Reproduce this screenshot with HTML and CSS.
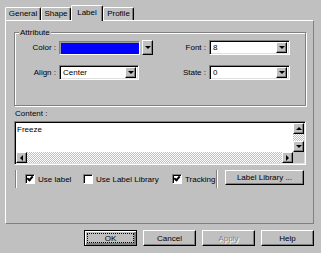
FILE: index.html
```html
<!DOCTYPE html>
<html lang="en">
<head>
  <meta charset="UTF-8" />
  <title>Label Properties</title>
  <link rel="stylesheet" href="styles.css">
</head>
<body>
  <div class="dialog">
    <div class="tabs">
      <div class="tab tab-general">General</div>
      <div class="tab tab-shape">Shape</div>
      <div class="tab tab-label active">Label</div>
      <div class="tab tab-profile">Profile</div>
    </div>

    <div class="panel">
      <div class="group">
        <span class="legend">Attribute</span>
        <div class="attr-row first">
          <span class="lbl lbl-left">Color :</span>
          <div class="ctl">
            <span class="color-field"></span>
            <span class="btn3d drop-big"><i class="tri-down"></i></span>
          </div>
          <span class="lbl lbl-right">Font :</span>
          <div class="select wide">
            <span class="val">8</span>
            <span class="btn3d drop"><i class="tri-down"></i></span>
          </div>
        </div>
        <div class="attr-row">
          <span class="lbl lbl-left">Align :</span>
          <div class="ctl">
            <div class="select">
              <span class="val">Center</span>
              <span class="btn3d drop"><i class="tri-down"></i></span>
            </div>
          </div>
          <span class="lbl lbl-right">State :</span>
          <div class="select wide">
            <span class="val">0</span>
            <span class="btn3d drop"><i class="tri-down"></i></span>
          </div>
        </div>
      </div>

      <div class="content-lbl">Content :</div>
      <div class="memo">
        <div class="memo-main">
          <div class="memo-text">Freeze</div>
          <div class="vscroll">
            <span class="btn3d sb-btn"><i class="tri-up"></i></span>
            <span class="sb-track"></span>
            <span class="btn3d sb-btn"><i class="tri-down"></i></span>
          </div>
        </div>
        <div class="hscroll">
          <span class="btn3d sb-btn"><i class="tri-left"></i></span>
          <span class="sb-track"></span>
          <span class="btn3d sb-btn"><i class="tri-right"></i></span>
          <span class="sb-corner"></span>
        </div>
      </div>

      <div class="opt-row">
        <span class="vsep"></span>
        <label class="opt opt-1"><span class="cbox checked"></span>Use label</label>
        <label class="opt opt-2"><span class="cbox"></span>Use Label Library</label>
        <label class="opt opt-3"><span class="cbox checked"></span>Tracking</label>
        <span class="vsep"></span>
        <span class="btn3d push lib-btn">Label Library ...</span>
      </div>
    </div>

    <div class="buttons">
      <span class="btn3d push default"><span class="focus">OK</span></span>
      <span class="btn3d push">Cancel</span>
      <span class="btn3d push disabled">Apply</span>
      <span class="btn3d push">Help</span>
    </div>
  </div>
</body>
</html>
```

FILE: styles.css
```css
body {
  margin: 0;
  background: #c0c0c0;
  font-family: "Liberation Sans", Arial, sans-serif;
  font-size: 8px;
  color: #000;
}
.dialog {
  width: 321px;
  height: 253px;
  overflow: hidden;
}

/* tabs */
.tabs {
  display: flex;
  align-items: flex-end;
  height: 20px;
  padding-left: 5px;
  box-sizing: border-box;
}
.tab {
  height: 13px;
  line-height: 12px;
  text-align: center;
  box-sizing: border-box;
  border-top: 1px solid #fff;
  border-left: 1px solid #fff;
  border-right: 1px solid #000;
  border-radius: 2px 2px 0 0;
  box-shadow: inset -1px 0 #808080;
}
.tab-general { width: 36px; }
.tab-shape { width: 30px; }
.tab-label { width: 32px; }
.tab-profile { width: 31px; }
.tab.active {
  height: 16px;
  line-height: 13px;
  margin-bottom: -1px;
  background: #c0c0c0;
  position: relative;
  z-index: 1;
}

/* page panel */
.panel {
  width: 309px;
  height: 204px;
  margin-left: 5px;
  box-sizing: border-box;
  border: 1px solid;
  border-color: #fff #808080 #808080 #fff;
}

/* shared 3d bits */
.btn3d {
  display: flex;
  align-items: center;
  justify-content: center;
  box-sizing: border-box;
  background: #c0c0c0;
  border: 1px solid;
  border-color: #fff #000 #000 #fff;
  box-shadow: inset -1px -1px #808080;
}
.tri-down, .tri-up, .tri-left, .tri-right {
  display: block;
  width: 0;
  height: 0;
}
.tri-down {
  border-left: 3px solid transparent;
  border-right: 3px solid transparent;
  border-top: 3px solid #000;
}
.tri-up {
  border-left: 3px solid transparent;
  border-right: 3px solid transparent;
  border-bottom: 3px solid #000;
}
.tri-left {
  border-top: 3px solid transparent;
  border-bottom: 3px solid transparent;
  border-right: 3px solid #000;
}
.tri-right {
  border-top: 3px solid transparent;
  border-bottom: 3px solid transparent;
  border-left: 3px solid #000;
}

/* attribute group */
.group {
  width: 292px;
  height: 74px;
  margin: 11px 0 0 8px;
  box-sizing: border-box;
  border: 1px solid #808080;
  box-shadow: 1px 1px 0 #fff, inset 1px 1px 0 #fff;
}
.legend {
  display: block;
  width: fit-content;
  margin: -5px 0 0 4px;
  padding: 0 1px;
  line-height: 9px;
  background: #c0c0c0;
}
.attr-row {
  display: flex;
  align-items: center;
  height: 15px;
  margin-top: 10px;
}
.attr-row.first {
  margin-top: 3px;
}
.lbl {
  text-align: right;
}
.lbl-left {
  width: 41px;
  margin-right: 3px;
}
.lbl-right {
  width: 53px;
  margin-right: 3px;
}
.ctl {
  display: flex;
  align-items: center;
  width: 94px;
}
.color-field {
  display: block;
  width: 81px;
  height: 14px;
  box-sizing: border-box;
  border: 1px solid;
  border-color: #808080 #fff #fff #808080;
  background: #0000ff;
  box-shadow: inset 1px 1px #a0a0a0;
}
.drop-big {
  width: 11px;
  height: 15px;
  margin-left: 2px;
}
.select {
  display: flex;
  align-items: center;
  width: 80px;
  height: 15px;
  box-sizing: border-box;
  border: 1px solid;
  border-color: #808080 #fff #fff #808080;
  box-shadow: inset 1px 1px #000, inset -1px -1px #dfdfdf;
  background: #fff;
  padding: 2px;
}
.select.wide {
  width: 81px;
}
.select .val {
  flex: 1;
  padding-left: 1px;
}
.drop {
  width: 11px;
  height: 11px;
}

/* content memo */
.content-lbl {
  margin: 3px 0 0 9px;
  line-height: 10px;
}
.memo {
  width: 292px;
  height: 44px;
  margin: 2px 0 0 8px;
  box-sizing: border-box;
  border: 1px solid;
  border-color: #808080 #fff #fff #808080;
  box-shadow: inset 1px 1px #000, inset -1px -1px #dfdfdf;
  padding: 1px;
}
.memo-main {
  display: flex;
  height: 29px;
  background: #fff;
}
.memo-text {
  flex: 1;
  padding: 2px 0 0 1px;
  line-height: 9px;
}
.vscroll {
  display: flex;
  flex-direction: column;
  width: 11px;
}
.hscroll {
  display: flex;
  height: 11px;
}
.sb-btn {
  width: 11px;
  height: 11px;
  flex: none;
}
.sb-track {
  flex: 1;
  background-image: repeating-conic-gradient(#fff 0 25%, #c0c0c0 0 50%);
  background-size: 2px 2px;
}
.sb-corner {
  width: 11px;
  background: #c0c0c0;
}

/* option row */
.opt-row {
  display: flex;
  align-items: center;
  height: 18px;
  margin: 5px 0 0 9px;
}
.vsep {
  align-self: stretch;
  width: 0;
  border-left: 1px solid #808080;
  border-right: 1px solid #fff;
}
.opt {
  display: flex;
  align-items: center;
}
.opt-1 { width: 58px; margin-left: 8px; }
.opt-2 { width: 89px; }
.opt-3 { width: 44px; }
.cbox {
  width: 10px;
  height: 10px;
  box-sizing: border-box;
  margin-right: 3px;
  background: #fff;
  border: 1px solid;
  border-color: #808080 #fff #fff #808080;
  box-shadow: inset 1px 1px #000;
  position: relative;
}
.cbox.checked::after {
  content: "";
  position: absolute;
  left: 2px;
  top: 0;
  width: 2px;
  height: 4px;
  border: solid #000;
  border-width: 0 2px 2px 0;
  transform: rotate(40deg);
}
.push {
  height: 16px;
  width: 53px;
}
.lib-btn {
  width: 79px;
  height: 15px;
  margin-left: 7px;
  align-self: flex-start;
}

/* dialog buttons */
.buttons {
  display: flex;
  gap: 6px;
  margin: 6px 0 0 84px;
}
.push.default {
  border-color: #000;
  box-shadow: inset 1px 1px #fff, inset -2px -2px #808080;
}
.focus {
  display: flex;
  align-items: center;
  justify-content: center;
  width: 45px;
  height: 8px;
  border: 1px dotted #000;
}
.push.disabled {
  color: #808080;
  text-shadow: 1px 1px #fff;
}
```
